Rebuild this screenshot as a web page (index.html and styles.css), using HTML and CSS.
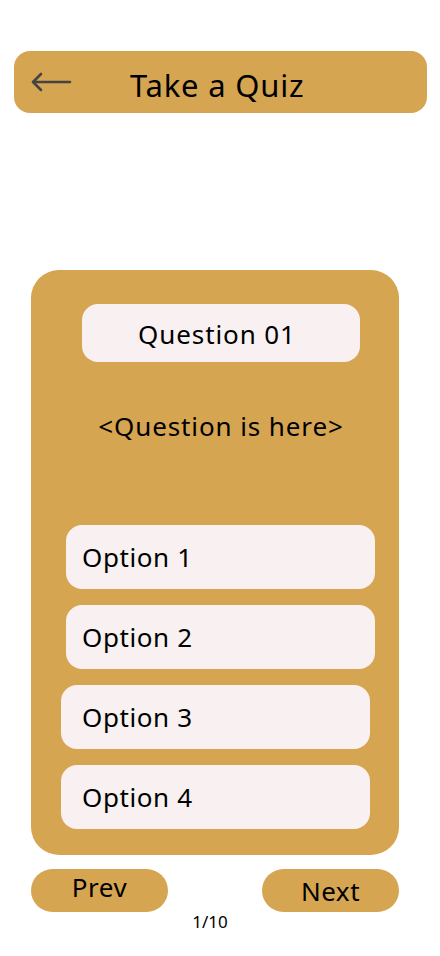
FILE: index.html
```html
<!DOCTYPE html>
<html>
<head>
<meta charset="utf-8">
<link rel="stylesheet" href="styles.css">
</head>
<body>
<header class="topbar">
  <svg class="back" width="42" height="20" viewBox="0 0 42 20">
    <path d="M40 10 H3 M11 2 L3 10 L11 18" fill="none" stroke="#444" stroke-width="2.6" stroke-linecap="round" stroke-linejoin="round"/>
  </svg>
  <h1 class="title">Take a Quiz</h1>
</header>
<main class="card">
  <div class="qnum">Question 01</div>
  <div class="qtext">&lt;Question is here&gt;</div>
  <div class="options">
    <div class="option o-right">Option 1</div>
    <div class="option o-right">Option 2</div>
    <div class="option">Option 3</div>
    <div class="option">Option 4</div>
  </div>
</main>
<nav class="pager">
  <button class="btn prev">Prev</button>
  <button class="btn next">Next</button>
</nav>
<div class="count">1/10</div>
</body>
</html>
```
FILE: styles.css
```css
* { box-sizing: border-box; }
body {
  margin: 0;
  background: #fff;
  font-family: "Noto Sans", "Open Sans", sans-serif;
  color: #000;
}
.topbar {
  margin: 51px 0 0 14px;
  width: 413px;
  height: 62px;
  background: #D6A552;
  border-radius: 16px;
  display: flex;
  align-items: center;
}
.back {
  margin-left: 16px;
  flex: none;
}
.title {
  margin: 0 0 0 58px;
  font-size: 31px;
  font-weight: 400;
  line-height: 1;
  padding-top: 6px;
  letter-spacing: 0.8px;
}
.card {
  margin: 157px 0 0 31px;
  width: 368px;
  height: 585px;
  background: #D6A552;
  border-radius: 28px;
  padding: 34px 0 26px 0;
  display: flex;
  flex-direction: column;
}
.qnum {
  margin-left: 51px;
  width: 278px;
  height: 58px;
  background: #F8F0F1;
  border-radius: 16px;
  display: flex;
  align-items: center;
  justify-content: center;
  font-size: 26px;
  letter-spacing: 0.9px;
  padding-top: 2px;
  padding-right: 8px;
}
.qtext {
  margin-left: 51px;
  width: 278px;
  text-align: center;
  font-size: 26px;
  letter-spacing: 0.9px;
  line-height: 32px;
  margin-top: 48px;
  white-space: nowrap;
}
.options {
  margin-top: auto;
  display: flex;
  flex-direction: column;
  gap: 16px;
}
.option {
  margin-left: 30px;
  width: 309px;
  height: 64px;
  background: #F8F0F1;
  border-radius: 16px;
  display: flex;
  align-items: center;
  padding-left: 21px;
  font-size: 26px;
  letter-spacing: 0.6px;
}
.option.o-right {
  margin-left: 35px;
  padding-left: 16px;
}
.pager {
  margin: 14px 0 0 31px;
  width: 368px;
  display: flex;
  justify-content: space-between;
}
.btn {
  width: 137px;
  height: 43px;
  border: none;
  border-radius: 22px;
  background: #D6A552;
  font-family: inherit;
  font-size: 26px;
  letter-spacing: 0.5px;
  color: #000;
  padding: 0;
  line-height: 1;
}
.prev { padding-bottom: 8px; }
.next { padding-top: 1px; }
.count {
  text-align: center;
  font-size: 17px;
  margin-top: -2px;
  padding-right: 20px;
}
```
